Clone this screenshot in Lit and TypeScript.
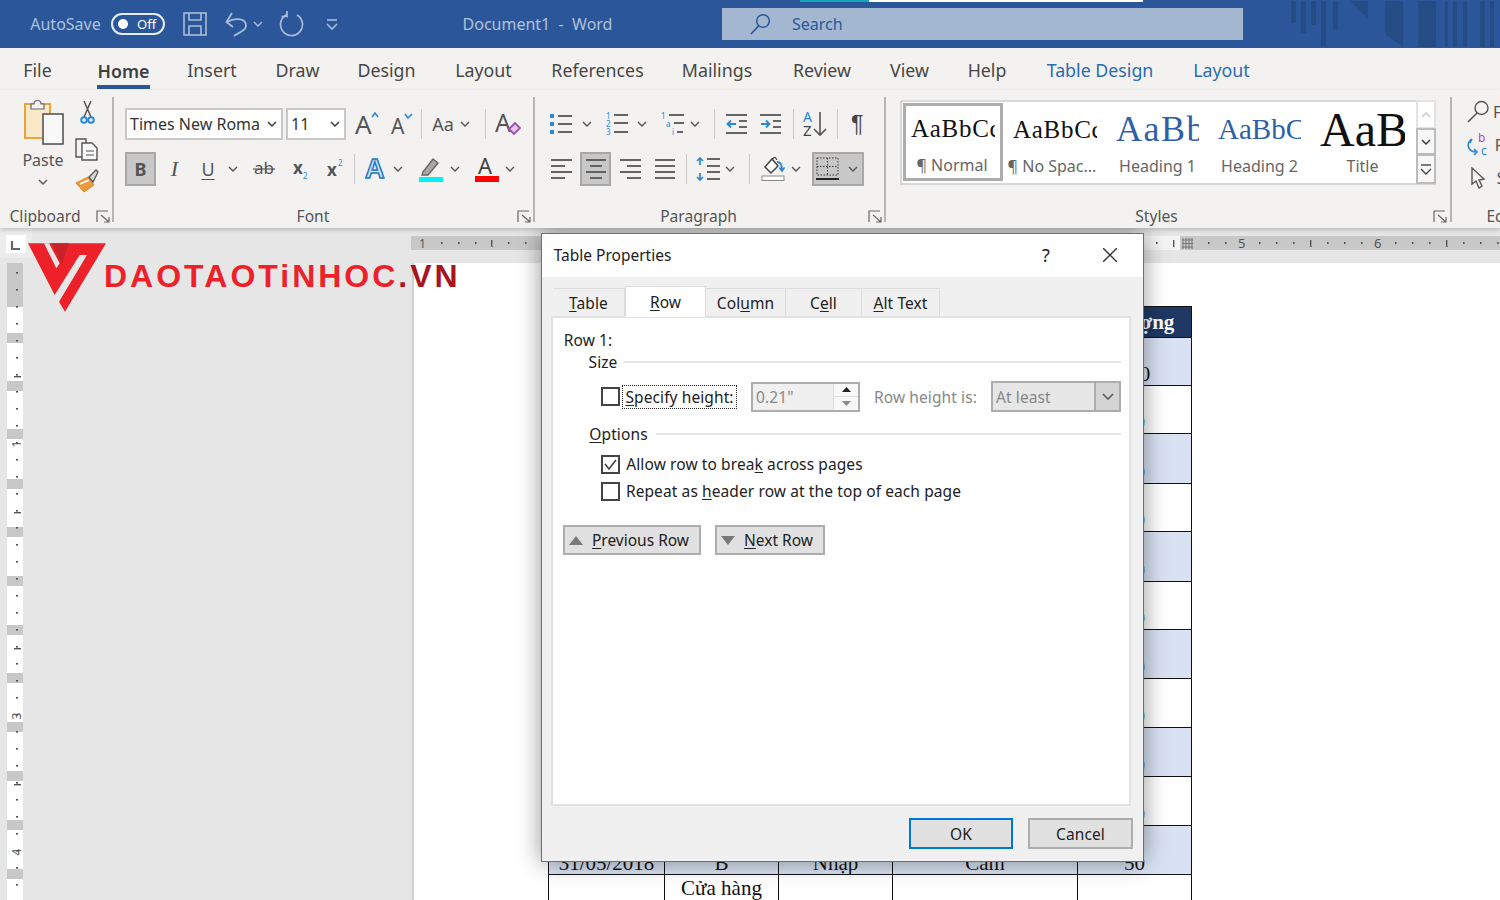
import { LitElement, html, svg, css } from "lit";
import { customElement } from "lit/decorators.js";

type Item = [number, number, unknown];
const place = (items: Item[], origin = 0) => {
  let cur = origin;
  return items.map(([x, w, t]) => {
    const m = x - cur;
    cur = x + w;
    return html`<span class="slot" style="margin-left:${m}px;width:${w}px">${t}</span>`;
  });
};
const I = (w: number, h: number, c: unknown) =>
  html`<svg class="ic" width=${w} height=${h} viewBox="0 0 ${w} ${h}">${c}</svg>`;
const G = "#555";
const B = "#2b88d8";
const ln = (x1: number, y1: number, x2: number, y2: number, c = G, w = 1.6) =>
  svg`<line x1=${x1} y1=${y1} x2=${x2} y2=${y2} stroke=${c} stroke-width=${w}/>`;
const T = (x: number, y: number, s: string, size: number, c = G, extra = "") =>
  svg`<text x=${x} y=${y} font-size=${size} fill=${c} font-family=${extra || "Noto Sans, sans-serif"}>${s}</text>`;
const chev = (c = G) => I(10, 6, svg`<polyline points="1,1 5,5 9,1" fill="none" stroke=${c} stroke-width="1.4"/>`);
const launcher = I(14, 13, svg`<path d="M1 12V1H12M5 5L13 12M13 7V12H8" fill="none" stroke="#666" stroke-width="1.2"/>`);
const lines = (arr: number[][]) => arr.map((a) => ln(a[0], a[2], a[1], a[2], "#555", 1.8));

const paste = I(42, 48, svg`
  <rect x="3" y="5" width="25" height="34" fill="#f9e9c9" stroke="#e8a33d" stroke-width="2"/>
  <path d="M9 5h3a3.500 3.500 0 0 1 7 0h3v5H9z" fill="#f4f3f2" stroke="#666" stroke-width="1.2"/>
  <rect x="21" y="15" width="20" height="30" fill="#f8f8f8" stroke="#555" stroke-width="1.6"/>`);
const cut = I(15, 25, svg`
  <path d="M4 1L11 17M11 1L4 17" fill="none" stroke="#555" stroke-width="1.5"/>
  <circle cx="4" cy="20" r="2.8" fill="none" stroke=${B} stroke-width="2"/>
  <circle cx="11" cy="20" r="2.8" fill="none" stroke=${B} stroke-width="2"/>`);
const copy = I(24, 23, svg`
  <path d="M8 19H1V1H11V5" fill="none" stroke="#555" stroke-width="1.4"/>
  <path d="M7 5H17L22 10V22H7Z" fill="#f8f8f8" stroke="#555" stroke-width="1.4"/>
  ${ln(11, 13, 19, 13, G, 1)}${ln(11, 17, 19, 17, G, 1)}`);
const painter = I(24, 24, svg`
  <path d="M1 14L13 8L19 16L9 23Z" fill="#ed9a3a" stroke="#e8862a"/>
  <path d="M5 15L14 11" stroke="#fff" stroke-width="1.5"/>
  <path d="M14 8L21 1L23 3L18 13Z" fill="#d8d8d8" stroke="#555" stroke-width="1.3"/>`);

const growA = I(24, 26, svg`${T(0, 23, "A", 26, G)}<polyline points="17,6 20,2 23,6" fill="none" stroke=${B} stroke-width="1.6"/>`);
const shrinkA = I(22, 26, svg`${T(0, 23, "A", 21, G)}<polyline points="14,3 17,7 21,3" fill="none" stroke=${B} stroke-width="1.6"/>`);
const clearFmt = I(26, 26, svg`${T(0, 21, "A", 25, G)}<path d="M14 18L20 12L25 17L19 23Z" fill="#e6c6ea" stroke="#9b4fb0" stroke-width="1.8"/>`);
const bulletIc = I(23, 22, svg`
  <rect x="0" y="1" width="4" height="4" fill=${B}/><rect x="0" y="9" width="4" height="4" fill=${B}/><rect x="0" y="17" width="4" height="4" fill=${B}/>
  ${lines([[8, 22, 3], [8, 22, 11], [8, 22, 19]])}`);
const numIc = I(23, 24, svg`
  ${T(0, 7, "1", 8, B)}${T(0, 15, "2", 8, B)}${T(0, 23, "3", 8, B)}
  ${lines([[8, 22, 3], [8, 22, 11], [8, 22, 20]])}`);
const multiIc = I(24, 24, svg`
  ${T(0, 7, "1", 8, B)}${T(5, 15, "a", 8, B)}${T(11, 23, "i", 8, B)}
  ${lines([[8, 23, 3], [13, 23, 11], [16, 22, 20]])}`);
const outdent = I(22, 20, svg`
  ${lines([[0, 21, 1], [13, 21, 7], [13, 21, 13], [0, 21, 19]])}
  <path d="M10 10H2M5 6.5L1.5 10L5 13.5" fill="none" stroke=${B} stroke-width="1.8"/>`);
const indent = I(22, 20, svg`
  ${lines([[0, 21, 1], [13, 21, 7], [13, 21, 13], [0, 21, 19]])}
  <path d="M1 10H9M6 6.5L9.5 10L6 13.5" fill="none" stroke=${B} stroke-width="1.8"/>`);
const sortIc = I(24, 26, svg`
  ${T(0, 11, "A", 14, B)}${T(0, 25, "Z", 15, "#444")}
  <path d="M17 1V24M11 18L17 24L23 18" fill="none" stroke="#555" stroke-width="1.6"/>`);
const pilcrow = I(16, 24, svg`${T(0, 20, "¶", 23, "#444", "Liberation Sans, sans-serif")}`);
const alignIc = (a: number[][]) => I(22, 20, svg`${lines(a)}`);
const lineSp = I(25, 24, svg`
  <path d="M4 8V1M1 4L4 1L7 4M4 16V23M1 20L4 23L7 20" fill="none" stroke=${B} stroke-width="1.7"/>
  ${lines([[11, 24, 2], [11, 24, 9], [11, 24, 15], [11, 24, 22]])}`);
const shading = I(24, 24, svg`
  <path d="M4 10L11 2L17 9L10 16Z" fill="#fff" stroke="#444" stroke-width="1.5"/>
  <path d="M11 2L14 0L16 3" fill="none" stroke="#444" stroke-width="1.2"/>
  <path d="M16 5C20 5 21 9 21 13M18.500 10.500L21 14L23.500 10.500" fill="none" stroke=${B} stroke-width="1.8"/>
  <rect x="1" y="19" width="22" height="4.500" fill="#fff" stroke="#888"/>`);
const borderIc = I(24, 24, svg`
  <rect x="1" y="1" width="21" height="17" fill="none" stroke="#333" stroke-dasharray="1.5 1.5"/>
  <path d="M11.5 1V18M1 9.500H22" stroke="#333" stroke-dasharray="1.5 1.5"/>
  ${ln(0, 22, 23, 22, "#111", 1.8)}`);

const textA = I(24, 26, svg`<text x="0" y="22" font-size="27" font-weight="700" fill="#cfe4f6" stroke="#2477c4" stroke-width="1.5" font-family="Liberation Sans, sans-serif">A</text>`);
const highlighter = I(24, 26, svg`
  <path d="M4 16L14 3L19 7L9 19L3 19Z" fill="#a8a8a8" stroke="#666" stroke-width="1.4"/>
  <rect x="0" y="21" width="24" height="5" fill="#00f4f4"/>`);
const fontColor = I(24, 26, svg`${T(3, 18, "A", 22, "#444")}<rect x="0" y="20" width="24" height="6" fill="#f00"/>`);
const ab = I(22, 20, svg`${T(1, 15, "ab", 17, "#555")}${ln(0, 10, 22, 10, "#555", 1.2)}`);
const sub = I(17, 24, svg`<text x="0" y="17" font-size="17" font-weight="700" fill="#555" font-family="Noto Sans, sans-serif">x</text>${T(10, 22, "2", 8, B)}`);
const sup = I(17, 24, svg`<text x="0" y="19" font-size="17" font-weight="700" fill="#555" font-family="Noto Sans, sans-serif">x</text>${T(11, 9, "2", 8, B)}`);

const findIc = I(23, 23, svg`<circle cx="14.5" cy="8" r="6.5" fill="none" stroke="#555" stroke-width="1.4"/><path d="M10 13L1 22" stroke="#555" stroke-width="1.6"/>`);
const replIc = I(22, 23, svg`${T(11, 9, "b", 12, "#b146c2")}${T(14, 22, "c", 12, B)}<path d="M5 6C-1 10 0 19 10 19M7 16L10 19L7 22M5 6L3 10" fill="none" stroke=${B} stroke-width="1.6"/>`);
const selIc = I(16, 22, svg`<path d="M2 1V17L6 14L9 21L12 19L9 13L14 12Z" fill="#f4f3f2" stroke="#555" stroke-width="1.4"/>`);

const saveIc = I(24, 24, svg`
  <rect x="1" y="1" width="22" height="22" fill="none" stroke="#a9bcd8" stroke-width="1.6"/>
  <path d="M6 1V8H18V1M6 23V14H18V23" fill="none" stroke="#a9bcd8" stroke-width="1.6"/>`);
const undoIc = I(24, 26, svg`<path d="M8 2L2.500 11L9 16M3 11C9 7 22 6 22 15C22 20 15 21 10 25" fill="none" stroke="#a9bcd8" stroke-width="1.8"/>`);
const redoIc = I(25, 26, svg`<path d="M8 3.500A11 11 0 1 0 18 4M8 0V5.500H2.500" fill="none" stroke="#a9bcd8" stroke-width="1.7"/>`);
const customIc = I(12, 11, svg`${ln(1, 1, 11, 1, "#a9bcd8", 1.6)}<polyline points="1,5 6,10 11,5" fill="none" stroke="#a9bcd8" stroke-width="1.6"/>`);
const searchIc = I(21, 22, svg`<circle cx="13" cy="8" r="6.3" fill="none" stroke="#2b579a" stroke-width="1.5"/><path d="M8.5 13L1 21" stroke="#2b579a" stroke-width="1.8"/>`);

const titlePattern = html`<svg class="ic" width="210" height="46" viewBox="0 0 210 46">
  <g fill="#24497f" opacity=".75">
    <rect x="1" y="0" width="5" height="22"/><rect x="11" y="0" width="5" height="32"/><rect x="21" y="0" width="5" height="24"/>
    <rect x="31" y="0" width="5" height="45"/><rect x="43" y="0" width="5" height="28"/>
    <path d="M60 0H78V18Z"/><path d="M95 0H113V46L95 33Z"/><rect x="128" y="0" width="18" height="48"/>
    <rect x="155" y="0" width="3" height="48"/><rect x="163" y="0" width="4" height="48"/><rect x="173" y="0" width="4" height="48"/>
    <rect x="190" y="0" width="5" height="48"/><rect x="200" y="0" width="4" height="48"/>
  </g></svg>`;

const hticks = [441, 458, 475, 508, 525, 1156, 1208, 1225, 1259, 1276, 1293, 1327, 1344, 1361, 1395, 1412, 1429, 1463, 1480, 1497];
const hlong = [491, 1173, 1310, 1446];
const hruler = html`<svg class="blk" width="1500" height="35" viewBox="0 228 1500 35">
  <rect x="411" y="236" width="130" height="14" fill="#c8c8c8"/>
  <rect x="1143" y="236" width="37" height="14" fill="#f4f4f4"/>
  <rect x="1180" y="236" width="320" height="14" fill="#c8c8c8"/>
  <rect x="0" y="228" width="32" height="30" fill="#ececec"/>
  <rect x="6" y="235" width="20" height="18" fill="#fff"/>
  <path d="M12 241V249H20" fill="none" stroke="#666" stroke-width="2.2"/>
  ${hticks.map((x) => svg`<rect x=${x} y="242" width="1.6" height="2" fill="#555"/>`)}
  ${hlong.map((x) => svg`<rect x=${x} y="240" width="1.4" height="7" fill="#555"/>`)}
  <text x="419" y="248" font-size="12" fill="#555" font-family="Noto Sans, sans-serif">1</text>
  <text x="1238" y="248" font-size="13" fill="#555" font-family="Noto Sans, sans-serif">5</text>
  <text x="1374" y="248" font-size="13" fill="#555" font-family="Noto Sans, sans-serif">6</text>
  <g stroke="#777" stroke-width="1"><path d="M1183 238V249M1186 238V249M1189 238V249M1192 238V249M1182 240H1193M1182 243.500H1193M1182 247H1193"/></g>
</svg>`;

const marks = [338, 386, 434, 484, 532, 581, 630, 678, 727, 776, 825, 874];
const vticks: number[] = [];
for (let y = 272; y < 900; y += 17) vticks.push(y);
const vruler = html`<svg class="ic" width="30" height="637" viewBox="0 263 30 637">
  <rect x="7" y="263" width="16" height="637" fill="#fff"/>
  <rect x="7" y="263" width="16" height="44" fill="#c8c8c8"/>
  ${marks.map((y) => svg`<rect x="7" y=${y - 5} width="16" height="10" fill="#c8c8c8"/>`)}
  ${vticks.filter((y) => (y + 5) % 136 !== 0 && (y - 36) % 68 !== 0).map((y) => svg`<rect x="16" y=${y} width="2" height="1.6" fill="#555"/>`)}
  ${[376, 512, 648, 784].map((y) => svg`<rect x="14" y=${y} width="7" height="1.4" fill="#555"/>`)}
  ${[[444, "1"], [716, "3"], [852, "4"]].map(([y, s]) => svg`<text transform="translate(21 ${y}) rotate(-90)" text-anchor="middle" font-size="12" fill="#555" font-family="Noto Sans, sans-serif">${s}</text>`)}
</svg>`;

const rowH = [48, 48, 50, 48, 50, 48, 49, 49, 49, 49];
const logoMark = html`<svg class="ic" width="78" height="69" viewBox="85 40 234 205">
  <polygon points="85,40 319,40 196,245 178,215 262,75 240,75 165,195" fill="#ed2129"/>
  <polygon points="133,40 148,40 180,100 170,115" fill="#e6e6e6"/>
  <polygon points="155,40 208,40 185,103" fill="#c8222a"/>
</svg>`;

@customElement("app-root")
export class AppRoot extends LitElement {
  static styles = css`
    :host { display: block; width: 1500px; height: 900px; overflow: hidden; font-family: "Noto Sans", sans-serif; background: #e6e6e6; color: #444; }
    .slot { display: flex; align-items: center; justify-content: center; flex: none; height: 100%; white-space: nowrap; }
    .ic, .blk { display: block; flex: none; }
    .title { height: 48px; background: #2b579a; color: #b0c1da; font-size: 16px; overflow: hidden; }
    .strip { display: flex; height: 2px; }
    .teal { height: 2px; width: 100%; background: #12a8b5; }
    .wht { height: 2px; width: 100%; background: #fff; }
    .trow { display: flex; height: 44px; }
    .toggle { width: 54px; height: 22px; box-sizing: border-box; border: 2px solid #e6ecf5; border-radius: 11px; display: flex; align-items: center; padding-left: 5px; gap: 9px; color: #fff; font-size: 13px; }
    .knob { width: 10px; height: 10px; border-radius: 50%; background: #fff; flex: none; }
    .search { width: 100%; height: 32px; background: #a3b7d1; color: #2b579a; display: flex; align-items: center; border: 0; }
    .search svg { margin-left: 28px; }
    .search span { margin-left: 21px; font-size: 16px; }
    .tabs { display: flex; height: 42px; background: #f3f2f1; font-size: 17.8px; color: #484644; }
    .tabs .slot { padding-top: 2px; box-sizing: border-box; }
    .home { font-weight: 600; color: #3f3f3f; display: flex; flex-direction: column; align-items: stretch; height: 42px; justify-content: flex-start; width: 100%; text-align: center; margin-top: -2px; }
    .home b { font-weight: 600; line-height: 46px; height: 36px; }
    .home i { display: block; height: 4px; background: #2b579a; margin-top: 1px; }
    .ctx { color: #2b6cb0; }
    .ribbon { display: flex; height: 138px; background: #f3f2f1; color: #555; box-shadow: 0 2px 4px rgba(0,0,0,.18); position: relative; z-index: 1; }
    .grp { display: flex; flex-direction: column; flex: none; height: 138px; }
    .g1 { width: 112px; } .g2 { width: 419px; } .g3 { width: 349px; } .g4 { width: 564px; } .g5 { width: 48px; }
    .sep { width: 2px; height: 125px; margin-top: 7px; background: #b5b5b5; flex: none; }
    .r1 { display: flex; height: 34px; margin-top: 17px; }
    .r2 { display: flex; height: 34px; margin-top: 11px; }
    .lab { display: flex; height: 24px; margin-top: auto; font-size: 15.6px; color: #555; }
    .all { display: flex; height: 96px; margin-top: 8px; }
    .pastecol { display: flex; flex-direction: column; align-items: center; margin-top: 1px; height: 95px; font-size: 16px; }
    .pastecol .p { height: 20px; line-height: 20px; margin-top: 3px; }
    .pastecol .c { margin-top: 9px; }
    .smallcol { display: flex; flex-direction: column; align-items: center; height: 96px; padding-top: 2px; box-sizing: border-box; }
    .smallcol .a { margin-top: 13px; } .smallcol .b { margin-top: 8px; }
    .sel { box-sizing: border-box; height: 32px; width: 100%; background: #fff; border: 2px solid #c8c8c8; display: flex; align-items: center; padding-left: 3px; font-size: 16px; color: #333; justify-content: space-between; padding-right: 4px; overflow: hidden; }
    .vd { width: 1px; height: 30px; background: #c8c8c8; }
    .aa { font-size: 18px; display: flex; align-items: center; gap: 6px; color: #555; }
    .on { box-sizing: border-box; width: 100%; height: 34px; background: #c8c8c8; border: 2px solid #a8a8a8; display: flex; align-items: center; justify-content: center; }
    .bd { font-weight: 700; font-size: 18px; color: #555; }
    .it { font-family: "Liberation Serif", serif; font-style: italic; font-size: 22px; }
    .un { text-decoration: underline; font-size: 18px; text-underline-offset: 3px; }
    .bt2 { box-sizing: border-box; width: 100%; height: 34px; background: #c8c8c8; border: 2px solid #a8a8a8; display: flex; align-items: center; padding-left: 2px; gap: 8px; }
    .gal { display: flex; width: 100%; height: 85px; box-sizing: border-box; background: #fff; border: 2px solid #d8d8d8; }
    .galrow { height: 85px; margin-top: 10px; display: flex; }
    .gal .slot { align-items: flex-start; }
    .sty { display: flex; flex-direction: column; width: 100%; }
    .pv { height: 55px; line-height: 55px; overflow: hidden; white-space: nowrap; font-family: "Liberation Serif", serif; color: #111; font-size: 25px; letter-spacing: .7px; width: 100%; }
    .sl { height: 18px; line-height: 18px; font-size: 16px; color: #666; text-align: center; white-space: nowrap; }
    .sl.ns { margin-left: -6px; }
    .selbox { box-sizing: border-box; width: 100%; height: 78px; margin-top: 1px; border: 3px solid #adadad; padding-left: 5px; display: flex; flex-direction: column; }
    .selbox .pv { height: 45px; line-height: 45px; width: 84px; }
    .selbox .sl { margin-top: 5px; margin-right: 7px; }
    .pv.h1 { font-size: 36px; color: #2f5fa8; letter-spacing: 1.5px; }
    .pv.h2 { font-size: 29px; color: #2f5fa8; letter-spacing: 0; }
    .pv.tt { font-size: 48px; color: #111; letter-spacing: 0; }
    .scr { width: 100%; display: flex; flex-direction: column; height: 85px; margin-top: -2px; }
    .scr div { box-sizing: border-box; width: 100%; border: 2px solid #bcbcbc; display: flex; align-items: center; justify-content: center; background: #f8f8f8; flex-direction: column; gap: 2px; }
    .scr .u { height: 29px; border-color: #e3e3e3; background: #fff; }
    .scr .d { height: 27px; margin-top: -1px; }
    .scr .m { height: 30px; margin-top: -1px; }
    .ed { display: flex; height: 33px; font-size: 16px; align-items: center; }
    .edw { margin-top: 5px; }
    .work { position: relative; height: 672px; background: #e6e6e6; overflow: hidden; }
    .below { display: flex; height: 637px; }
    .left { width: 414px; flex: none; }
    .page { flex: 1; background: #fff; padding: 43px 0 0 134px; box-shadow: -2px 0 0 #d0d0d0; }
    table { border-collapse: collapse; table-layout: fixed; width: 643px; font-family: "Liberation Serif", serif; font-size: 21px; color: #111; }
    td, th { border: 1.5px solid #111; padding: 0; text-align: center; vertical-align: bottom; line-height: 22px; overflow: hidden; }
    th { background: #1f3864; color: #fff; height: 30px; vertical-align: middle; }
    tr.b td { background: #d9e2f3; }
    tr.top td { vertical-align: top; height: 60px; padding-top: 2px; }
    .logo { position: absolute; left: 28px; top: 15px; display: flex; align-items: flex-start; }
    .logo .word { margin-left: -2px; margin-top: 17px; font-family: "Liberation Sans", sans-serif; font-weight: 700; font-size: 32px; line-height: 32px; letter-spacing: 3px; color: #ed2129; white-space: nowrap; }
    .logo .word span { color: #a9141e; }
    .dlg { position: absolute; left: 541px; top: 5px; width: 603px; height: 629px; box-sizing: border-box; border: 1px solid #6f6f6f; background: #f0f0f0; box-shadow: 0 0 22px rgba(0,0,0,.42); display: flex; flex-direction: column; font-size: 15.5px; letter-spacing: .1px; color: #222; }
    .dt { display: flex; height: 41px; background: #fff; font-size: 15.5px; letter-spacing: 0; flex: none; padding-bottom: 2px; margin-bottom: -2px; }
    .q { font-size: 18px; }
    .dtabs { display: flex; height: 41px; flex: none; }
    .dtabs .slot { align-items: flex-end; }
    .tb { box-sizing: border-box; width: 100%; height: 28px; border: 1px solid #dcdcdc; border-bottom: 0; border-left: 0; display: flex; align-items: center; justify-content: center; padding-top: 1px; }
    .tb.act { height: 31px; background: #fff; margin-bottom: -1px; position: relative; z-index: 1; border-left: 1px solid #dcdcdc; padding: 0; }
    .panel { margin-left: 9px; width: 580px; height: 490px; box-sizing: border-box; background: #fff; border: 2px solid #e2e2e2; flex: none; }
    .ln { display: flex; }
    .l0 { height: 24px; margin-top: 10px; } .l1 { height: 20px; } .l2 { height: 31px; margin-top: 9px; } .l3 { height: 20px; margin-top: 12px; }
    .l4 { height: 20px; margin-top: 10px; } .l5 { height: 20px; margin-top: 7px; } .l6 { height: 30px; margin-top: 24px; }
    .rule { width: 100%; height: 2px; background: #e6e6e6; }
    .cb { width: 100%; height: 19px; box-sizing: border-box; border: 2px solid #444; background: #fff; display: flex; align-items: center; justify-content: center; }
    .focus { box-sizing: border-box; border: 1px dotted #222; width: 100%; height: 24px; display: flex; align-items: center; justify-content: center; }
    .inp { box-sizing: border-box; width: 100%; height: 30px; border: 2px solid #adadad; background: #f0f0f0; display: flex; color: #888; align-items: center; padding-left: 3px; justify-content: space-between; }
    .spin { width: 24px; height: 26px; display: flex; flex-direction: column; background: #f8f8f8; border-left: 1px solid #ddd; flex: none; }
    .spin div { height: 13px; display: flex; align-items: center; justify-content: center; }
    .spin div + div { border-top: 1px solid #ddd; }
    .dis { color: #888; }
    .cmb { box-sizing: border-box; width: 100%; height: 31px; border: 2px solid #adadad; background: #e6e6e6; display: flex; align-items: center; justify-content: space-between; color: #888; padding-left: 3px; }
    .cmbb { width: 23px; height: 27px; background: #d4d4d4; border-left: 2px solid #adadad; display: flex; align-items: center; justify-content: center; }
    .btn { box-sizing: border-box; width: 100%; height: 30px; background: #e1e1e1; border: 2px solid #adadad; display: flex; align-items: center; justify-content: center; gap: 9px; color: #222; }
    .btn.tri { padding-right: 6px; letter-spacing: 0; }
    .foot { display: flex; height: 31px; margin-top: 12px; flex: none; }
    .ok { height: 31px; border: 2px solid #0078d7; }
    .cancel { height: 31px; }
    u { text-underline-offset: 2px; }
  `;

  render() {
    const down = I(14, 9, svg`<path d="M0 0H14L7 9Z" fill="#7a7a7a"/>`);
    const up = I(14, 9, svg`<path d="M0 9H14L7 0Z" fill="#7a7a7a"/>`);
    return html`
      <div class="title">
        <div class="strip">${place([[800, 69, html`<div class="teal"></div>`], [869, 274, html`<div class="wht"></div>`]])}</div>
        <div class="trow">
          ${place([
            [30, 71, html`<span>AutoSave</span>`],
            [111, 54, html`<div class="toggle"><span class="knob"></span><span>Off</span></div>`],
            [183, 24, saveIc],
            [224, 24, undoIc],
            [253, 10, chev("#a9bcd8")],
            [279, 25, redoIc],
            [326, 12, customIc],
            [461, 153, html`<span>Document1 &nbsp;-&nbsp; Word</span>`],
            [722, 521, html`<div class="search">${searchIc}<span>Search</span></div>`],
            [1290, 210, titlePattern],
          ])}
        </div>
      </div>
      <div class="tabs">
        ${place([
          [24, 27, "File"],
          [97, 53, html`<div class="home"><b>Home</b><i></i></div>`],
          [189, 46, "Insert"],
          [276, 43, "Draw"],
          [358, 57, "Design"],
          [456, 55, "Layout"],
          [552, 91, "References"],
          [682, 70, "Mailings"],
          [793, 58, "Review"],
          [890, 39, "View"],
          [968, 38, "Help"],
          [1047, 106, html`<span class="ctx">Table Design</span>`],
          [1194, 55, html`<span class="ctx">Layout</span>`],
        ])}
      </div>
      <div class="ribbon">
        <div class="grp g1">
          <div class="all">
            ${place([
              [22, 42, html`<div class="pastecol">${paste}<span class="p">Paste</span><span class="c">${chev()}</span></div>`],
              [75, 24, html`<div class="smallcol">${cut}<span class="a">${copy}</span><span class="b">${painter}</span></div>`],
            ])}
          </div>
          <div class="lab">${place([[9, 72, "Clipboard"], [96, 14, launcher]])}</div>
        </div>
        <div class="sep"></div>
        <div class="grp g2">
          <div class="r1">
            ${place([
              [125, 158, html`<div class="sel"><span>Times New Roma</span>${chev("#333")}</div>`],
              [286, 60, html`<div class="sel"><span>11</span>${chev("#333")}</div>`],
              [355, 24, growA],
              [391, 22, shrinkA],
              [421, 1, html`<div class="vd"></div>`],
              [432, 38, html`<div class="aa">Aa ${chev()}</div>`],
              [485, 1, html`<div class="vd"></div>`],
              [495, 26, clearFmt],
            ], 114)}
          </div>
          <div class="r2">
            ${place([
              [125, 31, html`<div class="on bd">B</div>`],
              [168, 13, html`<span class="it">I</span>`],
              [200, 16, html`<span class="un">U</span>`],
              [228, 10, chev()],
              [253, 22, ab],
              [293, 17, sub],
              [327, 17, sup],
              [354, 1, html`<div class="vd"></div>`],
              [365, 24, textA],
              [393, 10, chev()],
              [419, 24, highlighter],
              [450, 10, chev()],
              [475, 24, fontColor],
              [505, 10, chev()],
            ], 114)}
          </div>
          <div class="lab">${place([[296, 34, "Font"], [517, 14, launcher]], 114)}</div>
        </div>
        <div class="sep"></div>
        <div class="grp g3">
          <div class="r1">
            ${place([
              [550, 23, bulletIc], [582, 10, chev()],
              [606, 23, numIc], [637, 10, chev()],
              [661, 24, multiIc], [690, 10, chev()],
              [714, 1, html`<div class="vd"></div>`],
              [726, 22, outdent], [760, 22, indent],
              [793, 1, html`<div class="vd"></div>`],
              [803, 24, sortIc],
              [837, 1, html`<div class="vd"></div>`],
              [851, 16, pilcrow],
            ], 535)}
          </div>
          <div class="r2">
            ${place([
              [551, 22, alignIc([[0, 21, 1], [0, 14, 7], [0, 21, 13], [0, 14, 19]])],
              [580, 31, html`<div class="on">${alignIc([[1, 21, 1], [5, 17, 7], [1, 21, 13], [5, 17, 19]])}</div>`],
              [619, 22, alignIc([[1, 22, 1], [8, 22, 7], [1, 22, 13], [8, 22, 19]])],
              [654, 22, alignIc([[1, 21, 1], [1, 21, 7], [1, 21, 13], [1, 21, 19]])],
              [686, 1, html`<div class="vd"></div>`],
              [696, 25, lineSp], [725, 10, chev()],
              [749, 1, html`<div class="vd"></div>`],
              [761, 24, shading], [791, 10, chev()],
              [812, 52, html`<div class="bt2">${borderIc}${chev()}</div>`],
            ], 535)}
          </div>
          <div class="lab">${place([[661, 75, "Paragraph"], [868, 14, launcher]], 535)}</div>
        </div>
        <div class="sep"></div>
        <div class="grp g4">
          <div class="galrow">
            ${place([
              [900, 536, html`<div class="gal">
                ${place([
                  [903, 100, html`<div class="selbox"><div class="pv">AaBbCcDd</div><div class="sl">¶ Normal</div></div>`],
                  [1013, 84, html`<div class="sty"><div class="pv">AaBbCcDd</div><div class="sl ns">¶ No Spac...</div></div>`],
                  [1116, 83, html`<div class="sty"><div class="pv h1">AaBbCc</div><div class="sl">Heading 1</div></div>`],
                  [1218, 83, html`<div class="sty"><div class="pv h2">AaBbC</div><div class="sl">Heading 2</div></div>`],
                  [1320, 85, html`<div class="sty"><div class="pv tt">AaBbC</div><div class="sl">Title</div></div>`],
                  [1416, 20, html`<div class="scr"><div class="u">${I(10, 6, svg`<polyline points="1,5 5,1 9,5" fill="none" stroke="#c8c8c8" stroke-width="1.5"/>`)}</div><div class="d">${chev("#333")}</div><div class="m">${I(12, 12, svg`${ln(1, 2, 11, 2, "#444", 1.4)}<polyline points="1,6 6,11 11,6" fill="none" stroke="#444" stroke-width="1.4"/>`)}</div></div>`],
                ], 902)}
              </div>`],
            ], 886)}
          </div>
          <div class="lab">${place([[1136, 41, "Styles"], [1433, 14, launcher]], 886)}</div>
        </div>
        <div class="sep"></div>
        <div class="grp g5">
          <div class="edw">
            <div class="ed">${place([[1467, 23, findIc], [1494, 30, "Find"]], 1452)}</div>
            <div class="ed">${place([[1467, 22, replIc], [1494, 60, "Replace"]], 1452)}</div>
            <div class="ed">${place([[1470, 16, selIc], [1494, 50, "Select"]], 1452)}</div>
          </div>
          <div class="lab">${place([[1487, 50, "Editing"]], 1452)}</div>
        </div>
      </div>
      <div class="work">
        ${hruler}
        <div class="below">
          <div class="left">${vruler}</div>
          <div class="page">
            <table>
              <colgroup><col style="width:116px" /><col style="width:114px" /><col style="width:114px" /><col style="width:185px" /><col style="width:114px" /></colgroup>
              <tr><th></th><th></th><th></th><th></th><th>Số lượng</th></tr>
              ${rowH.map((h, i) => html`<tr class=${i % 2 === 0 ? "b" : ""} style="height:${h}px"><td></td><td></td><td></td><td></td><td>${i === 0 ? "100" : "50"}</td></tr>`)}
              <tr class="b" style="height:49px"><td>31/05/2018</td><td>B</td><td>Nhập</td><td>Cám</td><td>50</td></tr>
              <tr class="top"><td></td><td>Cửa hàng</td><td></td><td></td><td></td></tr>
            </table>
          </div>
        </div>
        <div class="logo">${logoMark}<div class="word">DAOTAOTiNHOC<span>.VN</span></div></div>
        <div class="dlg">
          <div class="dt">${place([[554, 117, "Table Properties"], [1040, 12, html`<span class="q">?</span>`], [1103, 14, I(14, 14, svg`<path d="M0 0L14 14M14 0L0 14" stroke="#333" stroke-width="1.4"/>`)]], 542)}</div>
          <div class="dtabs">
            ${place([
              [553, 72, html`<div class="tb"><span><u>T</u>able</span></div>`],
              [625, 81, html`<div class="tb act"><span><u>R</u>ow</span></div>`],
              [706, 80, html`<div class="tb"><span>Col<u>u</u>mn</span></div>`],
              [786, 76, html`<div class="tb"><span>C<u>e</u>ll</span></div>`],
              [862, 78, html`<div class="tb"><span><u>A</u>lt Text</span></div>`],
            ], 542)}
          </div>
          <div class="panel">
            <div class="ln l0">${place([[563, 50, "Row 1:"]], 553)}</div>
            <div class="ln l1">${place([[589, 28, "Size"], [624, 497, html`<div class="rule"></div>`]], 553)}</div>
            <div class="ln l2">${place([
              [601, 19, html`<div class="cb"></div>`],
              [622, 115, html`<div class="focus"><span><u>S</u>pecify height:</span></div>`],
              [751, 109, html`<div class="inp"><span>0.21"</span><div class="spin"><div>${I(9, 5, svg`<path d="M0 5H9L4.500 0Z" fill="#222"/>`)}</div><div>${I(9, 5, svg`<path d="M0 0H9L4.500 5Z" fill="#888"/>`)}</div></div></div>`],
              [873, 105, html`<span class="dis">Row height is:</span>`],
              [991, 130, html`<div class="cmb"><span>At least</span><div class="cmbb">${I(12, 7, svg`<polyline points="1,1 6,6 11,1" fill="none" stroke="#555" stroke-width="1.5"/>`)}</div></div>`],
            ], 553)}</div>
            <div class="ln l3">${place([[589, 59, html`<span><u>O</u>ptions</span>`], [656, 465, html`<div class="rule"></div>`]], 553)}</div>
            <div class="ln l4">${place([
              [601, 19, html`<div class="cb">${I(13, 11, svg`<polyline points="1,5 5,10 12,1" fill="none" stroke="#444" stroke-width="1.6"/>`)}</div>`],
              [626, 237, html`<span>Allow row to brea<u>k</u> across pages</span>`],
            ], 553)}</div>
            <div class="ln l5">${place([
              [601, 19, html`<div class="cb"></div>`],
              [626, 335, html`<span>Repeat as <u>h</u>eader row at the top of each page</span>`],
            ], 553)}</div>
            <div class="ln l6">${place([
              [563, 138, html`<div class="btn tri">${up}<span><u>P</u>revious Row</span></div>`],
              [715, 110, html`<div class="btn tri">${down}<span><u>N</u>ext Row</span></div>`],
            ], 553)}</div>
          </div>
          <div class="foot">${place([
            [909, 104, html`<div class="btn ok">OK</div>`],
            [1028, 105, html`<div class="btn cancel">Cancel</div>`],
          ], 542)}</div>
        </div>
      </div>
    `;
  }
}
